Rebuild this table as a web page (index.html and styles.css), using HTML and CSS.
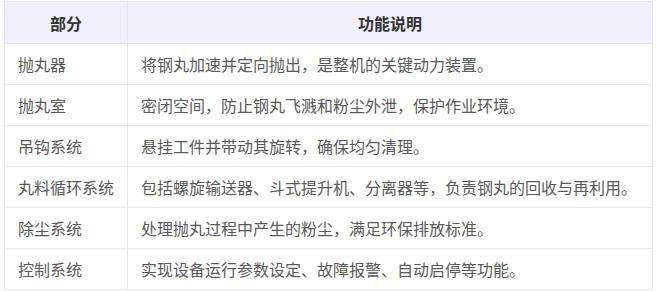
FILE: index.html
```html
<!DOCTYPE html>
<html lang="zh">
<head>
<meta charset="utf-8">
<link rel="stylesheet" href="styles.css">
</head>
<body>
<table class="parts">
  <thead>
    <tr><th class="col-part">部分</th><th>功能说明</th></tr>
  </thead>
  <tbody>
    <tr><td>抛丸器</td><td>将钢丸加速并定向抛出，是整机的关键动力装置。</td></tr>
    <tr><td>抛丸室</td><td>密闭空间，防止钢丸飞溅和粉尘外泄，保护作业环境。</td></tr>
    <tr><td>吊钩系统</td><td>悬挂工件并带动其旋转，确保均匀清理。</td></tr>
    <tr><td>丸料循环系统</td><td>包括螺旋输送器、斗式提升机、分离器等，负责钢丸的回收与再利用。</td></tr>
    <tr><td>除尘系统</td><td>处理抛丸过程中产生的粉尘，满足环保排放标准。</td></tr>
    <tr><td>控制系统</td><td>实现设备运行参数设定、故障报警、自动启停等功能。</td></tr>
  </tbody>
</table>
</body>
</html>
```
FILE: styles.css
```css
html, body {
  margin: 0;
  padding: 0;
  background: #ffffff;
}
body {
  padding: 1px 4px 0 4px;
  font-family: "Noto Sans CJK SC", "Noto Sans", sans-serif;
  font-size: 16px;
}
.parts {
  width: 649px;
  border-collapse: collapse;
  table-layout: fixed;
}
.parts th,
.parts td {
  border: 1px solid #e6e6ef;
  padding: 0 13px;
  text-align: left;
  white-space: nowrap;
  line-height: 22px;
}
.parts th {
  height: 41px;
  background: #f0f0fc;
  color: #333333;
  font-weight: 600;
  text-align: center;
}
.parts td {
  height: 40px;
  color: #5a5a5a;
}
.parts .col-part {
  width: 96px;
}
```
